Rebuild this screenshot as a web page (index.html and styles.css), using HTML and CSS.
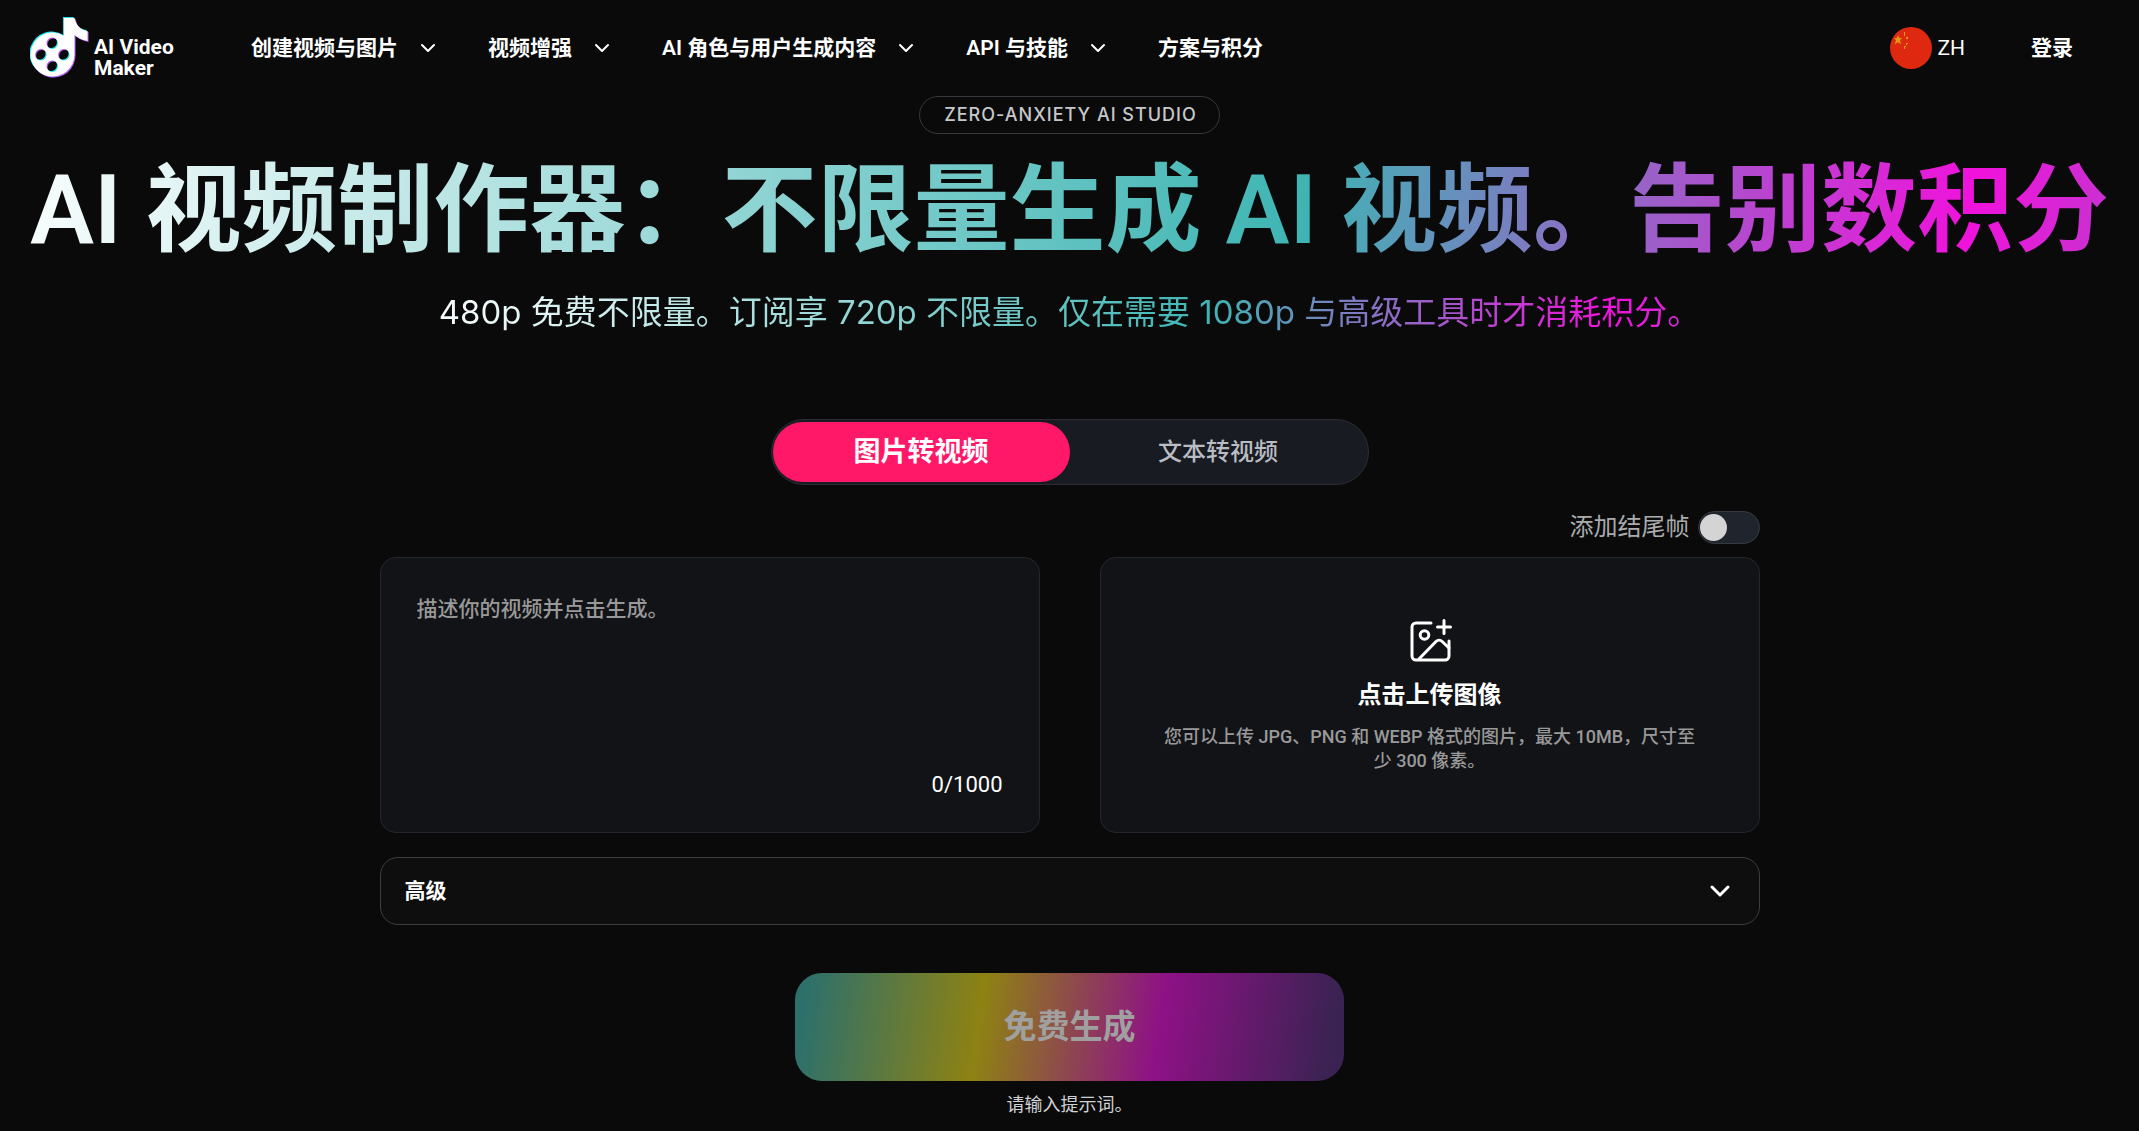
FILE: index.html
```html
<!DOCTYPE html>
<html lang="zh-CN">
<head>
  <meta charset="UTF-8" />
  <meta name="viewport" content="width=device-width, initial-scale=1.0"/>
  <title>AI Video Maker</title>
  <link rel="stylesheet" href="styles.css">
</head>
<body>
  <header class="header">
    <a href="#" class="logo">
      <svg class="logo-mark" viewBox="0 0 60 62" aria-hidden="true">
        <defs>
          <g id="note">
            <path fill-rule="evenodd" d="M34 1H44.500C46 8 50 13 57.500 14V24C52 23 48 21 44.500 18V37.500A22 22 0 1 1 34 18.800ZM22.200 20.500a5.700 5.700 0 1 0 .1 0ZM10.800 32a5.700 5.700 0 1 0 .1 0ZM33.800 32a5.700 5.700 0 1 0 .1 0ZM22.200 43.500a5.700 5.700 0 1 0 .1 0Z"/>
          </g>
        </defs>
        <use href="#note" x="-1" y="-1" fill="#25e6ec"/>
        <use href="#note" x="1" y="1" fill="#b45ff0"/>
        <use href="#note" fill="#fff"/>
      </svg>
      <span class="logo-text">AI Video<br>Maker</span>
    </a>
    <nav class="nav">
      <button type="button" class="nav-item">创建视频与图片 <svg class="chevron" viewBox="0 0 22 22"><path d="M5 8l6 6 6-6"/></svg></button>
      <button type="button" class="nav-item">视频增强 <svg class="chevron" viewBox="0 0 22 22"><path d="M5 8l6 6 6-6"/></svg></button>
      <button type="button" class="nav-item">AI 角色与用户生成内容 <svg class="chevron" viewBox="0 0 22 22"><path d="M5 8l6 6 6-6"/></svg></button>
      <button type="button" class="nav-item">API 与技能 <svg class="chevron" viewBox="0 0 22 22"><path d="M5 8l6 6 6-6"/></svg></button>
      <a href="#" class="nav-item">方案与积分</a>
    </nav>
    <div class="account">
      <button type="button" class="language">
        <svg class="flag" viewBox="0 0 42 42" aria-hidden="true">
          <circle cx="21" cy="21" r="21" fill="#de2910"/>
          <g fill="#dc9a10">
            <path d="M8 8l1.300 3h2.700l-2 2.300 1.200 4L8 15.200 4.800 17.300l1.200-4L4 11h2.700z"/>
            <path d="M14 5h1v4h-1zM16 10h2v2h-2zM16 16h2v1h-1v1h-1zM14 19h2v1h-1v2h-1z"/>
          </g>
        </svg>
        ZH
      </button>
      <a href="#" class="login">登录</a>
    </div>
  </header>

  <main class="hero">
    <p class="badge">ZERO-ANXIETY AI STUDIO</p>
    <h1 class="title">AI 视频制作器：不限量生成 AI 视频。告别数积分</h1>
    <p class="subtitle">480p 免费不限量。订阅享 720p 不限量。仅在需要 1080p 与高级工具时才消耗积分。</p>

    <div class="tabs" role="tablist">
      <button type="button" role="tab" aria-selected="true" class="tab active">图片转视频</button>
      <button type="button" role="tab" aria-selected="false" class="tab">文本转视频</button>
    </div>

    <form class="generator">
      <div class="end-frame">
        <label for="endFrame">添加结尾帧</label>
        <input type="checkbox" id="endFrame" class="switch">
      </div>

      <div class="panels">
        <div class="panel prompt">
          <textarea class="prompt-text" id="prompt" aria-label="描述你的视频" maxlength="1000" placeholder="描述你的视频并点击生成。"></textarea>
          <span class="counter" id="counter">0/1000</span>
        </div>
        <label class="panel upload">
          <input type="file" class="upload-input" accept="image/jpeg,image/png,image/webp">
          <svg class="upload-icon" viewBox="0 0 44 44" aria-hidden="true">
            <path d="M23 4H8a4 4 0 0 0-4 4v29a4 4 0 0 0 4 4h29a4 4 0 0 0 4-4V22"/>
            <path d="M36 1.500v13M29.500 8H42.500"/>
            <circle cx="16.500" cy="16" r="4.300"/>
            <path d="M10.500 40.500L28 22.500a4.500 4.500 0 0 1 6.200 0L41 29"/>
          </svg>
          <span class="upload-title">点击上传图像</span>
          <span class="upload-hint">您可以上传 JPG、PNG 和 WEBP 格式的图片，最大 10MB，尺寸至少 300 像素。</span>
        </label>
      </div>

      <button type="button" class="advanced" aria-expanded="false">
        高级
        <svg class="advanced-arrow" viewBox="0 0 24 24"><path d="M4 8l8 8 8-8"/></svg>
      </button>

      <button type="submit" class="generate" disabled>免费生成</button>
      <p class="notice">请输入提示词。</p>
    </form>
  </main>

  <script>
    const prompt = document.getElementById("prompt");
    prompt.addEventListener("input", () => {
      document.getElementById("counter").textContent = `${prompt.value.length}/1000`;
      document.querySelector(".generate").disabled = !prompt.value;
    });
  </script>
</body>
</html>
```
FILE: styles.css
```css
* {
  box-sizing: border-box;
}
body {
  margin: 0;
  background-color: #0a0a0a;
  color: #fff;
  font-family: Roboto, "Noto Sans CJK SC", sans-serif;
  font-size: 21px;
  line-height: 30px;
}
button, input, textarea {
  font: inherit;
  color: inherit;
}
button {
  border: none;
  background: none;
  padding: 0;
  cursor: pointer;
}
a {
  color: inherit;
  text-decoration: none;
}
p, h1 {
  margin: 0;
}
svg {
  fill: none;
  stroke-linecap: round;
  stroke-linejoin: round;
}

/* header */
.header {
  display: flex;
  align-items: center;
  height: 96px;
  padding: 0 66px 0 30px;
}
.logo {
  display: flex;
  align-items: flex-end;
  gap: 4px;
  width: 221px;
}
.logo-mark {
  width: 60px;
  height: 62px;
}
.logo-text {
  font-size: 21px;
  line-height: 21px;
  font-weight: bold;
}
.nav {
  display: flex;
  gap: 49px;
}
.nav-item {
  display: flex;
  align-items: center;
  gap: 19px;
  font-weight: 600;
  white-space: nowrap;
}
.chevron {
  width: 22px;
  height: 22px;
  stroke: #fff;
  stroke-width: 2;
}
.account {
  display: flex;
  align-items: center;
  gap: 66px;
  margin-left: auto;
}
.language {
  display: flex;
  align-items: center;
  gap: 5px;
}
.flag {
  width: 42px;
  height: 42px;
}
.login {
  font-weight: bold;
}

/* hero */
.hero {
  display: flex;
  flex-direction: column;
  align-items: center;
}
.badge, .subtitle {
  font-family: Inter, "Noto Sans CJK SC", sans-serif;
}
.badge {
  padding: 0 22px 0 24px;
  border: 1px solid #35383c;
  border-radius: 19px;
  color: #c6c8ca;
  font-size: 18px;
  line-height: 36px;
  font-weight: 500;
  letter-spacing: 1px;
}
.title, .subtitle {
  background-image: linear-gradient(98deg, #f8fdfd 0%, #3eb5b3 61%, #f012dc 93%, #c733d0 100%);
  background-clip: text;
  -webkit-background-clip: text;
  color: transparent;
}
.title {
  font-size: 96px;
  line-height: 120px;
  margin-top: 16px;
  font-weight: 600;
  white-space: nowrap;
}
.subtitle {
  margin-top: 18px;
  font-size: 33px;
  line-height: 48px;
}

.tabs {
  display: flex;
  width: 598px;
  height: 66px;
  margin-top: 83px;
  padding: 2px 1px;
  border: 1px solid #2a2e34;
  border-radius: 33px;
  background-color: #181b22;
}
.tab {
  flex: 1;
  border-radius: 30px;
  color: #b9bcc2;
  font-size: 24px;
  font-weight: 500;
}
.tab.active {
  background-color: #ff1768;
  color: #fff;
  font-size: 27px;
  font-weight: bold;
}

/* form */
.generator {
  display: flex;
  flex-direction: column;
  width: 100%;
  max-width: 1380px;
  margin-top: 24px;
}
.end-frame {
  display: flex;
  justify-content: flex-end;
  align-items: center;
  gap: 8px;
  height: 36px;
  color: #a9abad;
  font-size: 24px;
}
.switch {
  appearance: none;
  width: 62px;
  height: 33px;
  margin: 0;
  padding: 2px 1px;
  border: 1px solid #363a40;
  border-radius: 17px;
  background-color: #20242c;
}
.switch::before {
  content: "";
  display: block;
  width: 27px;
  height: 27px;
  border-radius: 50%;
  background-color: #d4d4d4;
}
.switch:checked::before {
  margin-left: auto;
}
.panels {
  display: grid;
  grid-template-columns: 1fr 1fr;
  gap: 60px;
  margin-top: 12px;
}
.panel {
  display: flex;
  flex-direction: column;
  height: 276px;
  border: 1px solid #24272d;
  border-radius: 16px;
  background-color: #121317;
}
.prompt {
  padding: 35px 36px 32px;
}
.prompt-text {
  flex: 1;
  padding: 0;
  border: none;
  outline: none;
  resize: none;
  background: none;
  line-height: 32px;
  font-weight: 500;
}
.prompt-text::placeholder {
  color: #999;
}
.counter {
  align-self: flex-end;
  font-size: 22px;
}
.upload {
  align-items: center;
  justify-content: center;
  padding: 2px 60px 0;
  text-align: center;
  cursor: pointer;
}
.upload-input {
  display: none;
}
.upload-icon {
  width: 44px;
  height: 44px;
  stroke: #fff;
  stroke-width: 3;
}
.upload-title {
  margin-top: 14px;
  font-size: 24px;
  line-height: 36px;
  font-weight: 600;
}
.upload-hint {
  margin-top: 12px;
  color: #999;
  font-size: 18px;
  line-height: 24px;
  font-weight: 500;
}
.advanced {
  display: flex;
  align-items: center;
  justify-content: space-between;
  height: 68px;
  margin-top: 24px;
  padding: 0 27px 0 24px;
  border: 1px solid #3c3e42;
  border-radius: 18px;
  background-color: #0e0e0e;
  font-weight: bold;
}
.advanced-arrow {
  width: 24px;
  height: 24px;
  stroke: #fff;
  stroke-width: 3;
}
.generate {
  align-self: center;
  width: 549px;
  height: 108px;
  margin-top: 48px;
  border-radius: 27px;
  background-image: linear-gradient(98deg, #2c706c 2%, #8e8213 34%, #8e1186 66%, #3a2352 97%);
  color: #a0a0a0;
  font-size: 33px;
  font-weight: bold;
}
.notice {
  margin-top: 10px;
  color: #d0d2d5;
  font-size: 18px;
  line-height: 27px;
  text-align: center;
}
```
